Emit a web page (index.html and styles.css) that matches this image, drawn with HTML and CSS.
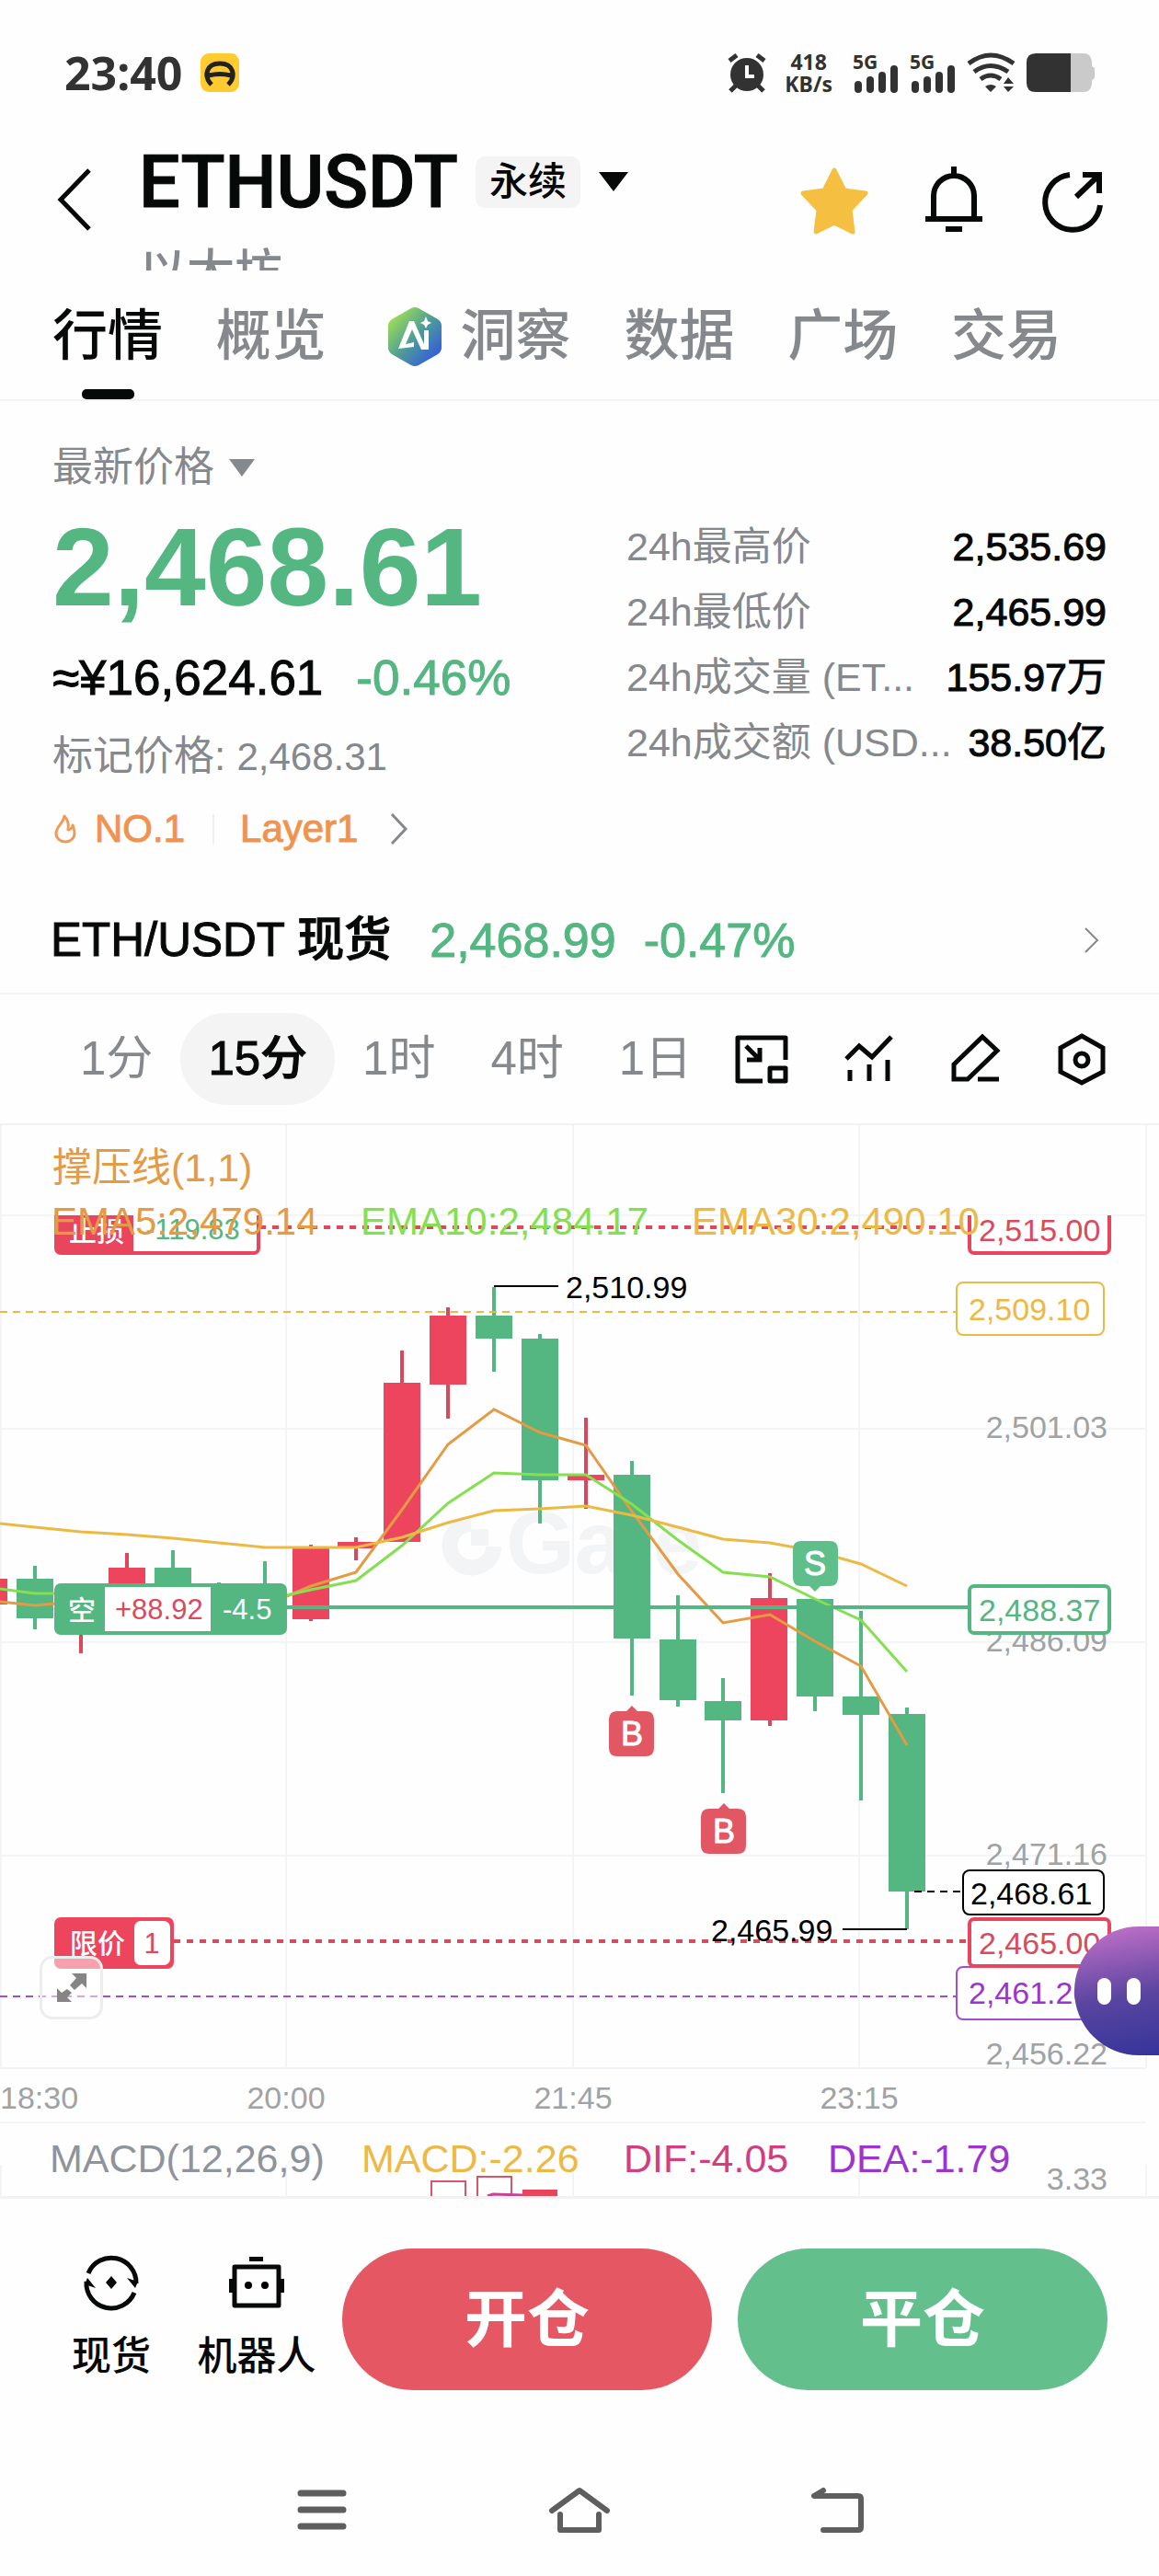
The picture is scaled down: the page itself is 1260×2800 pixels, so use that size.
FILE: index.html
```html
<!DOCTYPE html>
<html lang="zh-CN">
<head>
<meta charset="utf-8">
<meta name="viewport" content="width=device-width, initial-scale=1">
<title>ETHUSDT 永续</title>
<link rel="stylesheet" href="styles.css">
</head>
<body>
<div class="status">
  <span class="clock">23:40</span>
  <svg class="app-badge" width="42" height="42" viewBox="0 0 42 42" aria-hidden="true"><rect width="42" height="42" rx="9" fill="#ffcb2e"/><path d="M12 34C3 25 6 11 21 11s18 14 9 23M9 24q12-3 24 0" fill="none" stroke="#222" stroke-width="5"/></svg>
  <div class="status-right">
    <svg width="42" height="42" viewBox="0 0 42 42" aria-hidden="true"><circle cx="21" cy="23" r="18" fill="#323232"/><path d="M21 13v12h8" fill="none" stroke="#fff" stroke-width="4"/><path d="M2 8l8-6M40 8l-8-6M9 35l-6 6M33 35l6 6" stroke="#323232" stroke-width="5"/></svg>
    <div class="speed"><span>418</span><span>KB/s</span></div>
    <svg width="50" height="43" viewBox="0 0 50 43" role="img" aria-label="5G"><text x="0" y="17" class="net">5G</text><path d="M6 34v5M19 29v10M32 24v15M45 17v22" stroke="#323232" stroke-width="8" stroke-linecap="round"/></svg>
    <svg width="50" height="43" viewBox="0 0 50 43" role="img" aria-label="5G"><text x="0" y="17" class="net">5G</text><path d="M6 34v5M19 29v10M32 24v15M45 17v22" stroke="#323232" stroke-width="8" stroke-linecap="round"/></svg>
    <svg width="53" height="42" viewBox="0 0 53 42" aria-hidden="true"><path d="M2 11Q26-7 51 11M8 20q18-13 37 0M15 28q11-8 22 0" fill="none" stroke="#323232" stroke-width="5"/><path d="M20 36q6-4 12 0l-6 6zM40 33l5-7 6 7zM40 36h11l-6 6z" fill="#323232"/></svg>
    <svg width="74" height="42" viewBox="0 0 74 42" aria-hidden="true"><path d="M48 0h14q8 0 9 9v5l3 2v11l-3 2v4q-1 9-9 9H48z" fill="#cacaca"/><path d="M10 0h38v42H10Q0 42 0 32V10Q0 0 10 0z" fill="#323232"/></svg>
  </div>
</div>

<header class="header">
  <button class="back" aria-label="返回"><svg width="44" height="68" viewBox="0 0 44 68"><path d="M40 2L9 34l31 32" fill="none" stroke="#070808" stroke-width="5"/></svg></button>
  <div class="pair">
    <div class="pair-row">
      <h1>ETHUSDT</h1>
      <span class="chip">永续</span>
      <button class="caret" aria-label="切换合约"><svg width="32" height="22" viewBox="0 0 32 22"><path d="M0 0h32L16 21z" fill="#070808"/></svg></button>
    </div>
    <div class="pair-name">以太坊</div>
  </div>
  <div class="header-tools">
    <button aria-label="收藏"><svg width="76" height="76" viewBox="0 0 76 76"><path d="M38 6l11 22 23 3-17 18 3 24-20-10-20 10 3-24L4 31l23-3z" fill="#f5c042" stroke="#f5c042" stroke-width="5" stroke-linejoin="round"/></svg></button>
    <button aria-label="提醒"><svg width="76" height="76" viewBox="0 0 76 76"><path d="M16 58V34a22 22 0 0 1 44 0v24M7 59h62M38 2v8M29 70h18" fill="none" stroke="#070808" stroke-width="6"/></svg></button>
    <button aria-label="分享"><svg width="76" height="76" viewBox="0 0 76 76"><path d="M34 11A30 30 0 1 0 67 44" fill="none" stroke="#070808" stroke-width="6"/><path d="M41 35l24-23M48 11h18v20" fill="none" stroke="#070808" stroke-width="6"/></svg></button>
  </div>
</header>

<nav class="tabs">
  <a href="#quotes" class="active">行情</a>
  <a href="#overview">概览</a>
  <a href="#insight" class="with-icon"><svg width="60" height="66" viewBox="0 0 60 66" aria-hidden="true"><defs><linearGradient id="ai" x1="0" y1="0" x2="1" y2="1"><stop offset=".1" stop-color="#a2e053"/><stop offset=".5" stop-color="#4f9d97"/><stop offset=".85" stop-color="#3562d6"/></linearGradient></defs><path d="M26 2q4-2 8 0l21 12q4 3 4 7v24q0 4-4 7L34 64q-4 2-8 0L5 52q-4-3-4-7V21q0-4 4-7z" fill="url(#ai)"/><path d="M12 46l12-30h5l11 25V26h5v21h-8L27 25l-7 16 9-2v5z" fill="#fff"/><path d="M42 11l2 5 4 2-4 2-2 4-2-4-4-2 4-2z" fill="#fff"/></svg>洞察</a>
  <a href="#data">数据</a>
  <a href="#square">广场</a>
  <a href="#trade">交易</a>
</nav>

<section class="summary">
  <div class="price-col">
    <button class="price-type">最新价格<svg width="28" height="19" viewBox="0 0 28 19" aria-hidden="true"><path d="M0 0h28L14 19z" fill="#85888c"/></svg></button>
    <div class="last">2,468.61</div>
    <div class="fiat"><span class="medium">≈¥16,624.61</span><span class="up">-0.46%</span></div>
    <div class="mark">标记价格: <span>2,468.31</span></div>
    <a class="rank" href="#rank">
      <svg width="28" height="34" viewBox="0 0 28 34" aria-hidden="true"><path d="M13 3C12 11 4 14 4 22a10 9 0 0 0 20 0c0-4-1-6-2-9-1 4-3 5-5 5 1-6 0-11-4-15z" fill="none" stroke="#ef9a57" stroke-width="3" stroke-linejoin="round"/></svg>
      <span>NO.1</span><i class="rule"></i><span>Layer1</span>
      <svg class="rank-arrow" width="20" height="36" viewBox="0 0 20 36" aria-hidden="true"><path d="M2 2l15 16L2 34" fill="none" stroke="#85888c" stroke-width="3"/></svg>
    </a>
  </div>
  <dl class="stats">
    <div><dt>24h最高价</dt><dd>2,535.69</dd></div>
    <div><dt>24h最低价</dt><dd>2,465.99</dd></div>
    <div><dt>24h成交量 (ET...</dt><dd>155.97万</dd></div>
    <div><dt>24h成交额 (USD...</dt><dd>38.50亿</dd></div>
  </dl>
</section>

<a class="spot" href="#spot">
  <span class="spot-name medium">ETH/USDT 现货</span>
  <span class="spot-price up">2,468.99</span>
  <span class="up">-0.47%</span>
  <svg width="18" height="28" viewBox="0 0 18 28" aria-hidden="true"><path d="M2 1l13 13L2 27" fill="none" stroke="#85888c" stroke-width="2"/></svg>
</a>

<div class="toolbar">
  <div class="intervals">
    <button>1分</button><button class="on">15分</button><button>1时</button><button>4时</button><button>1日</button>
  </div>
  <div class="chart-tools">
    <button aria-label="小窗"><svg width="60" height="60" viewBox="0 0 60 60"><g fill="none" stroke="#070808" stroke-width="5"><path d="M31 54H4V7h52v24" stroke-linejoin="round"/><path d="M39 40h17v14H39z" stroke-linejoin="round"/><path d="M13 16l14 14M14 31h14V18"/></g></svg></button>
    <button aria-label="指标"><svg width="60" height="60" viewBox="0 0 60 60"><path d="M6 30l14-14 14 12L55 6M10 42v12M31 36v18M51 31v23" fill="none" stroke="#070808" stroke-width="5"/></svg></button>
    <button aria-label="画线"><svg width="60" height="60" viewBox="0 0 60 60"><path d="M7 36L38 6l16 15-32 31H7zM33 52h23" fill="none" stroke="#070808" stroke-width="5"/></svg></button>
    <button aria-label="设置"><svg width="60" height="60" viewBox="0 0 60 60"><path d="M30 5l23 13v26L30 56 7 44V18z" fill="none" stroke="#070808" stroke-width="5"/><circle cx="30" cy="31" r="7" fill="none" stroke="#070808" stroke-width="5"/></svg></button>
  </div>
</div>

<main class="chart">
<svg class="plot" viewBox="0 0 1260 1164" role="img" aria-label="ETHUSDT 15分 K线">
  <defs><clipPath id="pane"><rect x="0" y="98" width="1260" height="928"/></clipPath></defs>
  <path class="grid" d="M0 98h1246M0 330h1246M0 562h1246M0 794h1246M0 1025h1246M0 1084h1246M1 0v1025M311 0v1025M623 0v1025M934 0v1025M1246 0v1025M1 1130v34M311 1130v34M623 1130v34M934 1130v34M1246 1130v34"/>
  <g class="watermark"><path d="M512 433a24 24 0 1 0 25 25" fill="none" stroke="#f3f4f5" stroke-width="17"/><path d="M512 439h19v18h-19z"/><text x="550" y="487">Gate</text></g>

  <g class="axis" text-anchor="end">
    <text x="1204" y="340">2,501.03</text><text x="1204" y="572">2,486.09</text><text x="1204" y="804">2,471.16</text><text x="1204" y="1021">2,456.22</text><text x="1204" y="1157">3.33</text>
  </g>
  <g class="axis"><text x="0" y="1069">18:30</text><text x="311" y="1069" text-anchor="middle">20:00</text><text x="623" y="1069" text-anchor="middle">21:45</text><text x="934" y="1069" text-anchor="middle">23:15</text></g>

  <g class="rise">
    <path d="M88 500v74M138 465v40M338 456v83M387 448v25M437 245v208M487 198v121M637 318v99M837 487v166"/>
    <path class="body" d="M-32 493H8v28h-40zM68 510h40v30H68zM118 481h40v40h-40zM318 460h40v77h-40zM367 453h40v7h-40zM417 280h40v173h-40zM467 207h40v75h-40zM617 380h40v6h-40zM816 514h40v133h-40z"/>
  </g>
  <g class="fall">
    <path d="M38 479v69M188 462v40M238 497v20M288 474v40M537 176v92M587 227v206M687 365v255M737 511v121M786 601v125M886 515v122M936 528v206M986 633v241"/>
    <path class="body" d="M18 493h40v43H18zM168 481h40v40h-40zM517 207h40v25h-40zM567 232h40v154h-40zM667 380h40v178h-40zM717 559h40v66h-40zM766 626h40v21h-40zM866 515h40v106h-40zM916 621h40v20h-40zM966 640h40v193h-40z"/>
  </g>

  <g class="ema">
    <polyline stroke="#e59a44" points="0,518 38,522 60,520 312,512 338,501 387,486 437,418 487,347 537,309 587,334 637,348 687,420 737,488 786,541 837,532 886,561 936,588 986,674"/>
    <polyline stroke="#84e050" points="0,504 38,509 60,509 312,511 338,505 387,495 437,457 487,411 537,378 587,380 637,380 687,412 737,451 786,486 837,491 886,515 936,538 986,594"/>
    <polyline stroke="#edb945" points="0,433 38,437 88,442 138,445 188,449 238,454 288,459 387,459 437,448 487,432 537,419 587,417 637,414 687,424 737,437 786,450 837,454 886,463 936,477 986,501"/>
  </g>

  <path d="M312 524h740" stroke="#54b681" stroke-width="4"/>
  <path d="M0 203h1040" stroke="#edb945" stroke-width="2" stroke-dasharray="8 6"/>
  <path d="M282 111h770M189 887h863" stroke="#d94a5c" stroke-width="4" stroke-dasharray="7 7"/>
  <path d="M0 947h1040" stroke="#a44cd3" stroke-width="2" stroke-dasharray="8 6"/>
  <path d="M994 833h52" stroke="#000" stroke-width="2" stroke-dasharray="8 6"/>
  <path d="M537 175h70M916 874h70" stroke="#000" stroke-width="2"/>
  <g class="tag-text"><text x="615" y="188">2,510.99</text><text x="773" y="887">2,465.99</text></g>

  <g clip-path="url(#pane)">
    <rect x="61" y="88" width="220" height="51" rx="5" fill="#fff" stroke="#e9465d" stroke-width="4"/>
    <path d="M61 88h84v51H61z" fill="#e9465d"/>
    <text class="tag-cn" x="75" y="126">止损</text>
    <text class="num-sm" x="158" y="124" fill="#54b681">-119.83</text>
    <rect x="1054" y="88" width="152" height="51" rx="5" fill="#fff" stroke="#e9465d" stroke-width="4"/>
    <text class="tag-text red" x="1064" y="126">2,515.00</text>
  </g>
  <rect x="1040" y="171" width="160" height="57" rx="7" fill="#fff" stroke="#edb945" stroke-width="2"/>
  <text class="tag-text yellow" x="1053" y="212">2,509.10</text>

  <rect x="1054" y="501" width="152" height="51" rx="5" fill="#fff" stroke="#54b681" stroke-width="4"/>
  <text class="tag-text green" x="1064" y="539">2,488.37</text>
  <rect x="59" y="498" width="253" height="56" rx="7" fill="#54b681"/>
  <rect x="114" y="502" width="115" height="48" fill="#fff"/>
  <text class="tag-cn" x="74" y="538">空</text><text class="num-sm red" x="125" y="537">+88.92</text><text class="num-sm" x="242" y="537" fill="#fff">-4.5</text>

  <rect x="1047" y="810" width="153" height="48" rx="7" fill="#fff" stroke="#000" stroke-width="2"/>
  <text class="tag-text" x="1055" y="847">2,468.61</text>
  <rect x="1040" y="915" width="160" height="57" rx="7" fill="#fff" stroke="#a44cd3" stroke-width="2"/>
  <text class="tag-text purple" x="1053" y="955">2,461.20</text>
  <rect x="1054" y="863" width="152" height="51" rx="5" fill="#fff" stroke="#e9465d" stroke-width="4"/>
  <text class="tag-text red" x="1064" y="901">2,465.00</text>
  <rect x="59" y="861" width="130" height="56" rx="7" fill="#ed455d"/>
  <rect x="146" y="865" width="39" height="48" rx="7" fill="#fff"/>
  <text class="tag-cn" x="76" y="900">限价</text><text class="num-sm red" x="165" y="900" text-anchor="middle">1</text>

  <g class="marker" text-anchor="middle">
    <path d="M871 452h31q9 0 9 9v31q0 9-9 9h-10l-6 6-6-6h-9q-9 0-9-9v-31q0-9 9-9z" fill="#5fbf8b"/><text x="886" y="489">S</text>
    <path d="M671 637h10l6-6 6 6h9q9 0 9 9v31q0 9-9 9h-31q-9 0-9-9v-31q0-9 9-9z" fill="#e25764"/><text x="687" y="674">B</text>
    <path d="M771 743h10l6-6 6 6h9q9 0 9 9v31q0 9-9 9h-31q-9 0-9-9v-31q0-9 9-9z" fill="#e25764"/><text x="787" y="780">B</text>
  </g>

  <g class="legend">
    <text x="56" y="119" fill="#e59a44">EMA5:2,479.14</text>
    <text x="392" y="119" fill="#84e050">EMA10:2,484.17</text>
    <text x="752" y="119" fill="#edb945">EMA30:2,490.10</text>
  </g>
  <g class="legend-lg">
    <text x="57" y="61" fill="#e59a44">撑压线(1,1)</text>
    <text x="54" y="1138" fill="#8f949c">MACD(12,26,9)</text>
    <text x="393" y="1138" fill="#edb945">MACD:-2.26</text>
    <text x="678" y="1138" fill="#d13f7f">DIF:-4.05</text>
    <text x="900" y="1138" fill="#9c34cf">DEA:-1.79</text>
  </g>
  <path d="M469 1164v-16h37v16M519 1164v-21h37v21" fill="none" stroke="#d9566a" stroke-width="2"/>
  <path d="M568 1157h38v7h-38z" fill="#e9465d"/>
  <path d="M530 1164l6-2 32 1" fill="none" stroke="#c7458e" stroke-width="3"/>
</svg>
<button class="expand" aria-label="全屏"><svg width="36" height="34" viewBox="0 0 36 34"><path d="M18 1h16v16l-5-5-8 7-5-5 7-8zM2 17v15h16l-5-5 5-5-5-4-6 4z" fill="#858585"/></svg></button>
<button class="assistant" aria-label="助手"><i></i><i></i></button>
</main>

<footer class="actions">
  <a class="shortcut" href="#spot-trade"><svg width="60" height="60" viewBox="0 0 60 60" aria-hidden="true"><path d="M5 20A27 27 0 0 1 57 31M55 41A27 27 0 0 1 3 29" fill="none" stroke="#070808" stroke-width="5"/><path d="M47 25l12 4-3 7zM13 36L1 32l3-7zM30 23l6 7-6 7-6-7z" fill="#070808"/></svg>现货</a>
  <a class="shortcut" href="#bots"><svg width="60" height="60" viewBox="0 0 60 60" aria-hidden="true"><path d="M6 13h48v42H6z" fill="none" stroke="#070808" stroke-width="5" stroke-linejoin="round"/><path d="M22 2h15v5H22zM0 26h5v15H0zM55 26h5v15h-5z" fill="#070808"/><circle cx="21" cy="33" r="4"/><circle cx="39" cy="33" r="4"/></svg>机器人</a>
  <button class="trade open">开仓</button>
  <button class="trade close">平仓</button>
</footer>

<div class="sysnav">
  <button aria-label="最近任务"><svg width="70" height="50" viewBox="0 0 70 50"><path d="M12 7h46M12 25h46M12 43h46" stroke="#5e5e5e" stroke-width="7" stroke-linecap="round"/></svg></button>
  <button aria-label="主页"><svg width="70" height="50" viewBox="0 0 70 50"><path d="M5 26L35 4l30 22M14 30v17h42V30" fill="none" stroke="#5e5e5e" stroke-width="6" stroke-linecap="round" stroke-linejoin="round"/></svg></button>
  <button aria-label="返回"><svg width="70" height="50" viewBox="0 0 70 50"><path d="M20 4L10 10h48q3 0 3 3v31q0 3-3 3H20" fill="none" stroke="#5e5e5e" stroke-width="6" stroke-linecap="round" stroke-linejoin="round"/></svg></button>
</div>
</body>
</html>
```
FILE: styles.css
```css
* { box-sizing: border-box; }
body {
  margin: 0;
  background: #fefefe;
  color: #070808;
  font-family: "Liberation Sans", "Noto Sans CJK SC", sans-serif;
  font-size: 44px;
  line-height: 60px;
}
button {
  padding: 0;
  border: 0;
  background: none;
  color: inherit;
  font: inherit;
  cursor: pointer;
}
a { color: inherit; text-decoration: none; }
svg { display: block; flex: none; overflow: visible; }
h1, dl, dd { margin: 0; }
.up { color: #54b681; -webkit-text-stroke: 1px; }
.medium { -webkit-text-stroke: 1px; }

.status {
  display: flex;
  align-items: center;
  gap: 20px;
  height: 158px;
  padding: 0 70px;
  color: #323232;
  font-family: "Noto Sans", sans-serif;
}
.clock { font-size: 50px; font-weight: 700; }
.status-right { display: flex; align-items: center; gap: 12px; margin-left: auto; }
.speed {
  display: flex;
  flex-direction: column;
  align-items: center;
  margin: 0 10px 0 8px;
  font-size: 23px;
  font-weight: 700;
  line-height: 24px;
}
.net { font-size: 21px; font-weight: 700; fill: #323232; }

.header { display: flex; padding: 0 55px 0 57px; }
.back { width: 94px; margin-bottom: 18px; }
.pair-row { display: flex; align-items: center; height: 80px; }
.pair-row h1 { font: 500 79px/80px Roboto, sans-serif; -webkit-text-stroke: 1px; }
.chip {
  margin: 0 20px 0 19px;
  padding: 0 15px;
  border-radius: 10px;
  background: #f4f4f4;
  font-size: 42px;
  font-weight: 500;
  line-height: 56px;
}
.pair-name {
  height: 26px;
  margin-top: 30px;
  overflow: hidden;
  color: #85888c;
  font-size: 52px;
  font-weight: 500;
  line-height: 56px;
}
.header-tools {
  display: flex;
  align-items: center;
  gap: 54px;
  margin: 0 0 18px auto;
}

.tabs {
  display: flex;
  justify-content: space-between;
  padding: 0 106px 0 57px;
  border-bottom: 2px solid #f1f2f2;
  color: #85888c;
  font-size: 60px;
  font-weight: 500;
}
.tabs a {
  display: flex;
  flex-direction: column;
  align-items: center;
  height: 140px;
  padding-top: 42px;
}
.tabs .with-icon {
  flex-direction: row;
  gap: 20px;
  height: 102px;
  margin-left: 8px;
}
.tabs .active { color: #070808; }
.tabs .active::after {
  content: "";
  width: 57px;
  height: 11px;
  margin-top: auto;
  border-radius: 5px;
  background: #070808;
}

.summary { display: flex; justify-content: space-between; padding: 42px 57px 0; }
.price-col { display: flex; flex-direction: column; align-items: flex-start; }
.price-type { display: flex; align-items: center; gap: 16px; color: #85888c; }
.last {
  margin-top: 18px;
  color: #54b681;
  font-size: 120px;
  font-weight: 700;
  line-height: 120px;
}
.fiat { display: flex; gap: 36px; margin-top: 31px; font-size: 53px; }
.mark { margin-top: 25px; color: #85888c; }
.mark span { font-size: 42px; }
.rank { display: flex; align-items: center; margin-top: 18px; color: #ef9450; font-size: 42px; -webkit-text-stroke: 1px; }
.rank span:first-of-type { margin-left: 18px; }
.rule { width: 2px; height: 32px; margin: 0 28px 0 30px; background: #eeeff0; }
.rank-arrow { margin-left: 35px; }
.stats { width: 522px; padding-top: 81px; font-size: 43px; line-height: 71px; }
.stats div { display: flex; justify-content: space-between; white-space: nowrap; }
.stats dt { color: #85888c; }
.stats dd { -webkit-text-stroke: 1px; }

.spot {
  display: flex;
  align-items: center;
  height: 116px;
  margin-top: 34px;
  padding: 0 64px 0 55px;
  border-bottom: 2px solid #f1f2f2;
  font-size: 52px;
}
.spot-name { font-size: 51px; font-weight: 500; }
.spot-price { margin: 0 30px 0 42px; }
.spot svg { margin-left: auto; }

.toolbar {
  display: flex;
  align-items: center;
  justify-content: space-between;
  height: 142px;
  padding: 0 54px 0 57px;
  border-bottom: 2px solid #f1f2f2;
}
.intervals { display: flex; color: #85888c; font-size: 51px; }
.intervals button { height: 100px; padding: 0 30px; border-radius: 50px; }
.intervals .on { background: #f4f4f4; color: #070808; font-weight: 500; -webkit-text-stroke: 1px; }
.chart-tools { display: flex; gap: 56px; }

.chart { position: relative; border-bottom: 3px solid #f1f2f2; }
.plot { width: 100%; height: auto; overflow: hidden; }
.grid { fill: none; stroke: #f3f4f5; stroke-width: 2; }
.watermark { fill: #f3f4f5; font-size: 96px; font-weight: 700; }
.axis { fill: #a0a2a4; font-size: 34px; }
.rise { stroke: #d9485c; stroke-width: 4; }
.rise .body { fill: #ed455d; stroke: none; }
.fall { stroke: #54b681; stroke-width: 4; }
.fall .body { fill: #54b681; stroke: none; }
.ema { fill: none; stroke-width: 3; }
.tag-text { font-size: 34px; }
.num-sm { font-size: 31px; }
.tag-cn { font-size: 30px; font-weight: 500; fill: #fff; }
.red { fill: #d94a5c; }
.green { fill: #54b681; }
.yellow { fill: #edb945; }
.purple { fill: #9c34cf; }
.marker { fill: #fff; font-size: 36px; }
.marker text { stroke: #fff; stroke-width: 1px; }
.legend { font-size: 42px; }
.legend-lg { font-size: 43px; }

.expand {
  position: absolute;
  left: 43px;
  top: 903px;
  display: grid;
  place-items: center;
  width: 69px;
  height: 69px;
  border: 3px solid #eceded;
  border-radius: 14px;
  background: rgba(255, 255, 255, .5);
}
.assistant {
  position: absolute;
  right: 0;
  top: 871px;
  display: flex;
  align-items: center;
  justify-content: flex-end;
  gap: 17px;
  width: 92px;
  height: 140px;
  padding-right: 20px;
  border-radius: 70px 0 0 70px;
  background: linear-gradient(170deg, #c873cb, #5a45a0 55%, #35349a);
}
.assistant i { width: 15px; height: 29px; border-radius: 8px; background: #fff; }

.actions { display: flex; align-items: center; gap: 28px; padding: 54px 56px 0; }
.shortcut {
  display: flex;
  flex-direction: column;
  align-items: center;
  gap: 20px;
  min-width: 130px;
  font-size: 43px;
  font-weight: 500;
}
.trade {
  flex: 1;
  height: 154px;
  border-radius: 77px;
  color: #fff;
  font-size: 68px;
  font-weight: 700;
}
.open { background: #e55762; }
.close { background: #63c08d; }

.sysnav { display: flex; justify-content: center; gap: 210px; padding: 105px 0 46px; }
```
